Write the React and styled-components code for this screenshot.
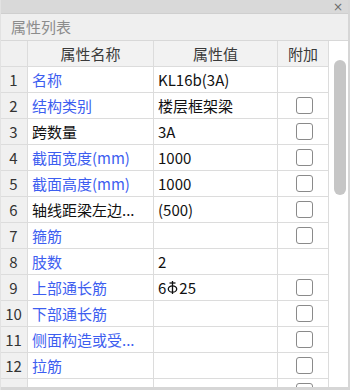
import React from 'react';
import styled, { createGlobalStyle } from 'styled-components';

const rows = [
  { name: '名称', value: 'KL16b(3A)', blue: true, check: false },
  { name: '结构类别', value: '楼层框架梁', blue: true, check: true },
  { name: '跨数量', value: '3A', blue: false, check: true },
  { name: '截面宽度(mm)', value: '1000', blue: true, check: true },
  { name: '截面高度(mm)', value: '1000', blue: true, check: true },
  { name: '轴线距梁左边...', value: '(500)', blue: false, check: true },
  { name: '箍筋', value: '', blue: true, check: true },
  { name: '肢数', value: '2', blue: true, check: false },
  { name: '上部通长筋', value: 'rebar', blue: true, check: true },
  { name: '下部通长筋', value: '', blue: true, check: true },
  { name: '侧面构造或受...', value: '', blue: true, check: true },
  { name: '拉筋', value: '', blue: true, check: true },
  { name: '', value: '', blue: true, check: true, partial: true },
];

export default function App() {
  return (
    <>
      <GlobalStyle />
      <Panel>
        <TopBar>
          <Close>×</Close>
        </TopBar>
        <Title>属性列表</Title>
        <Body>
          <Table>
            <Row header>
              <IndexCell header />
              <HeadCell>属性名称</HeadCell>
              <HeadCell>属性值</HeadCell>
              <HeadCell>附加</HeadCell>
            </Row>
            {rows.map((r, i) => (
              <Row key={i}>
                <IndexCell>{r.partial ? '' : i + 1}</IndexCell>
                <NameCell blue={r.blue}>{r.name}</NameCell>
                <ValueCell>
                  {r.value === 'rebar' ? (
                    <>
                      6<RebarIcon />25
                    </>
                  ) : (
                    r.value
                  )}
                </ValueCell>
                <CheckCell>{r.check && <Check />}</CheckCell>
              </Row>
            ))}
          </Table>
          <ScrollTrack>
            <Thumb />
          </ScrollTrack>
        </Body>
        <Footer />
      </Panel>
    </>
  );
}

function RebarIcon() {
  return (
    <svg width="11" height="15" viewBox="0 0 11 15" style={{ margin: '0 1px', verticalAlign: '-1px' }}>
      <line x1="5.5" y1="1" x2="5.5" y2="14" stroke="#111" strokeWidth="1.3" />
      <line x1="2.5" y1="3" x2="8.5" y2="3" stroke="#111" strokeWidth="1.3" />
      <ellipse cx="5.5" cy="9" rx="4.2" ry="3.2" fill="none" stroke="#111" strokeWidth="1.3" />
    </svg>
  );
}

// Styles

const GlobalStyle = createGlobalStyle`
  body {
    margin: 0;
    background: #ffffff;
    font-family: "Noto Sans CJK SC", "Noto Sans", sans-serif;
  }
`;

const Panel = styled.div`
  width: 350px;
  height: 390px;
  display: flex;
  flex-direction: column;
  overflow: hidden;
  background: #ffffff;
  box-sizing: border-box;
  border-left: 1px solid #e2e2e2;
  border-right: 2px solid #d6d6d6;
`;

const TopBar = styled.div`
  height: 13px;
  flex: none;
  background: #d9d9d9;
  border-bottom: 1px solid #cfcfcf;
  display: flex;
  justify-content: flex-end;
  align-items: center;
  padding-right: 5px;
`;

const Close = styled.span`
  font-size: 12px;
  line-height: 12px;
  color: #6c6c6c;
  font-family: "DejaVu Sans", sans-serif;
`;

const Title = styled.div`
  height: 26px;
  flex: none;
  background: #efefef;
  border-bottom: 1px solid #d8d8d8;
  color: #8c8c8c;
  font-size: 15px;
  line-height: 26px;
  padding-left: 10px;
`;

const Body = styled.div`
  flex: 1;
  display: flex;
  overflow: hidden;
  min-height: 0;
`;

const Table = styled.div`
  width: 328px;
  flex: none;
  display: flex;
  flex-direction: column;
`;

const Row = styled.div`
  display: grid;
  grid-template-columns: 27px 126px 124px 51px;
  height: 26px;
  flex: none;
  box-sizing: border-box;
  border-bottom: 1px solid #dcdcdc;
  background: ${(p) => (p.header ? '#f2f2f2' : '#ffffff')};
`;

const Cell = styled.div`
  display: flex;
  align-items: center;
  box-sizing: border-box;
  border-right: 1px solid #dcdcdc;
  font-size: 15px;
  white-space: nowrap;
  overflow: hidden;
`;

const IndexCell = styled(Cell)`
  justify-content: center;
  background: #f0f0f0;
  color: #333333;
  padding-right: 1px;
`;

const HeadCell = styled(Cell)`
  justify-content: center;
  color: #3a3a3a;
  background: #f2f2f2;
`;

const NameCell = styled(Cell)`
  padding-left: 4px;
  color: ${(p) => (p.blue ? '#3d5ef0' : '#111111')};
`;

const ValueCell = styled(Cell)`
  padding-left: 4px;
  color: #111111;
`;

const CheckCell = styled(Cell)`
  justify-content: center;
`;

const Check = styled.span`
  width: 17px;
  height: 17px;
  box-sizing: border-box;
  border: 1.5px solid #8a8a8a;
  border-radius: 3px;
  background: #ffffff;
  margin-left: 2px;
`;

const ScrollTrack = styled.div`
  flex: 1;
  background: #ffffff;
  padding: 19px 0 0 5px;
`;

const Thumb = styled.div`
  width: 12px;
  height: 135px;
  border-radius: 6px;
  background: #c6c6c6;
`;

const Footer = styled.div`
  height: 3px;
  flex: none;
  background: #d6d6d6;
`;
